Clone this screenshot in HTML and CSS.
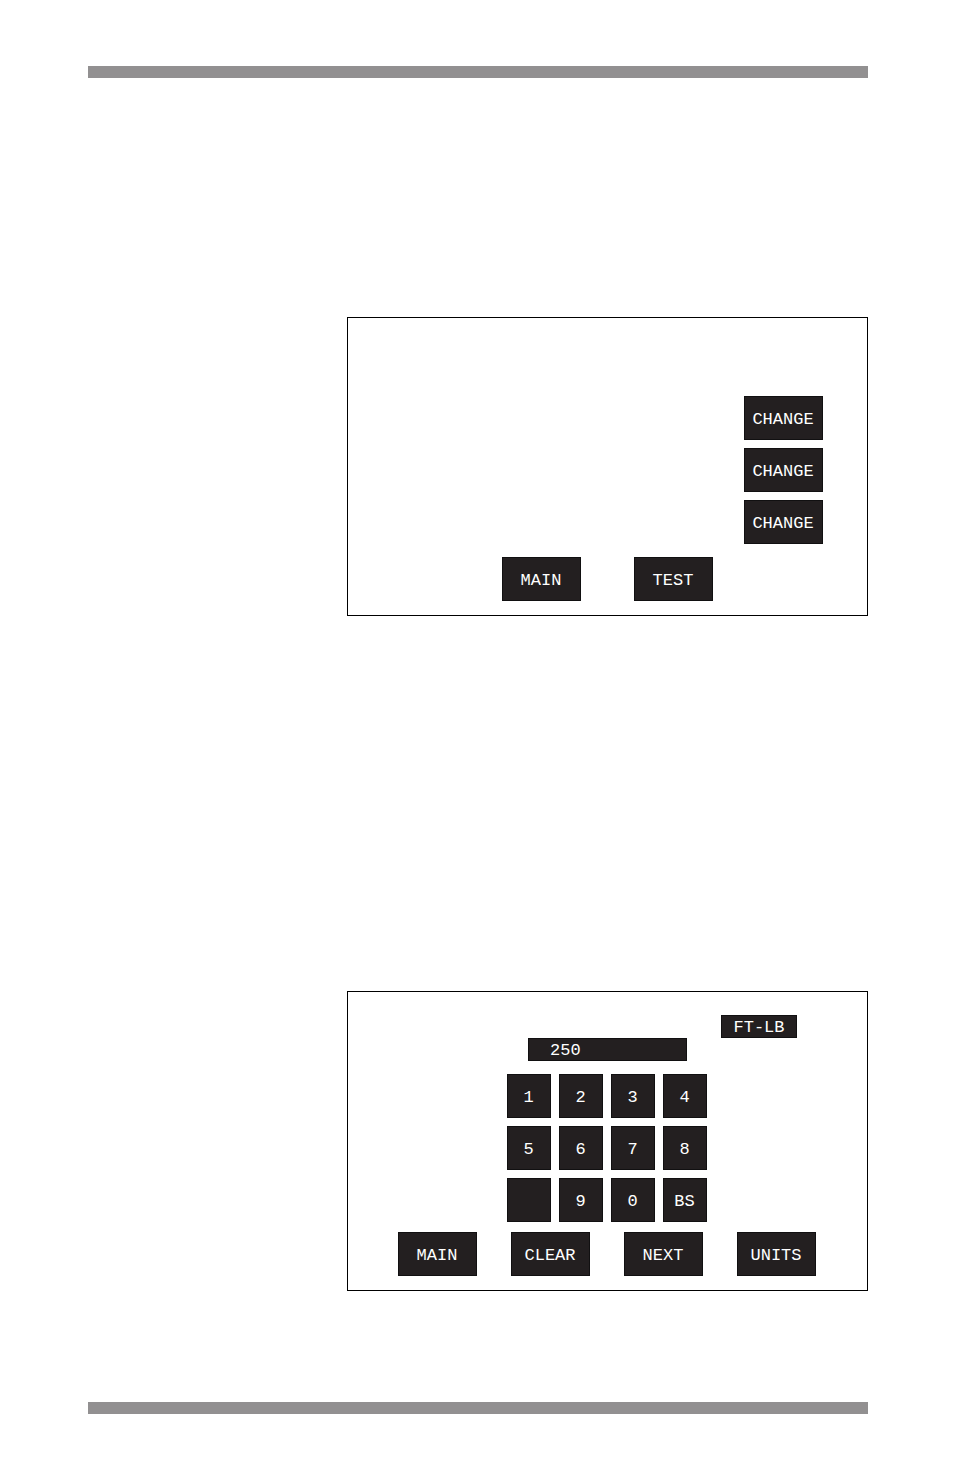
FILE: index.html
```html
<!DOCTYPE html>
<html lang="en">
<head>
<meta charset="utf-8">
<meta name="viewport" content="width=device-width, initial-scale=1">
<title>Torque tester screens</title>
<link rel="stylesheet" href="styles.css">
</head>
<body>
<header class="rule"></header>
<main class="screens">
  <section class="panel" aria-label="Test setup">
    <div class="changes">
      <button class="key wide" type="button">CHANGE</button>
      <button class="key wide" type="button">CHANGE</button>
      <button class="key wide" type="button">CHANGE</button>
    </div>
    <div class="actions setup-actions">
      <button class="key wide" type="button">MAIN</button>
      <button class="key wide" type="button">TEST</button>
    </div>
  </section>
  <section class="panel entry" aria-label="Value entry">
    <div class="unit-row"><span class="unit">FT-LB</span></div>
    <input class="value" type="text" value="250" aria-label="Value">
    <div class="keypad">
      <button class="key" type="button">1</button>
      <button class="key" type="button">2</button>
      <button class="key" type="button">3</button>
      <button class="key" type="button">4</button>
      <button class="key" type="button">5</button>
      <button class="key" type="button">6</button>
      <button class="key" type="button">7</button>
      <button class="key" type="button">8</button>
      <button class="key" type="button" aria-label="Blank"></button>
      <button class="key" type="button">9</button>
      <button class="key" type="button">0</button>
      <button class="key" type="button">BS</button>
    </div>
    <div class="actions entry-actions">
      <button class="key wide" type="button">MAIN</button>
      <button class="key wide" type="button">CLEAR</button>
      <button class="key wide" type="button">NEXT</button>
      <button class="key wide" type="button">UNITS</button>
    </div>
  </section>
</main>
<footer class="rule"></footer>
</body>
</html>
```

FILE: styles.css
```css
* {
  box-sizing: border-box;
}

body {
  margin: 0;
  padding: 66px 86px 61px 88px;
  background: #fff;
  color: #fff;
  font: 17px/20px "Liberation Mono", "Courier New", monospace;
}

.rule {
  height: 12px;
  background: #929091;
}

.screens {
  display: flex;
  flex-direction: column;
  gap: 375px;
  margin-left: 259px;
  padding: 239px 0 111px;
}

.panel {
  border: 1px solid #000;
  padding: 78px 0 14px;
}

.changes {
  display: flex;
  flex-direction: column;
  align-items: flex-end;
  gap: 8px;
  padding-right: 44px;
}

.key,
.unit,
.value {
  border: 1px solid #111011;
  border-radius: 0;
  background: #231f20;
  color: #fff;
  font: inherit;
}

.key {
  width: 44px;
  height: 44px;
  padding: 4px 1px 0 0;
}

.wide {
  width: 79px;
}

.actions {
  display: flex;
  justify-content: center;
}

.setup-actions {
  gap: 53px;
  margin-top: 13px;
}

.entry {
  display: flex;
  flex-direction: column;
  padding-top: 23px;
}

.unit-row {
  display: flex;
  justify-content: flex-end;
  padding-right: 70px;
}

.unit {
  width: 76px;
  height: 23px;
  padding-top: 2px;
  text-align: center;
}

.value {
  align-self: center;
  width: 159px;
  height: 23px;
  padding: 2px 21px 0;
}

.keypad {
  display: grid;
  grid-template-columns: repeat(4, 44px);
  justify-content: center;
  gap: 8px;
  margin-top: 13px;
  padding-right: 1px;
}

.entry-actions {
  gap: 34px;
  margin-top: 10px;
  padding-right: 1px;
}
```
